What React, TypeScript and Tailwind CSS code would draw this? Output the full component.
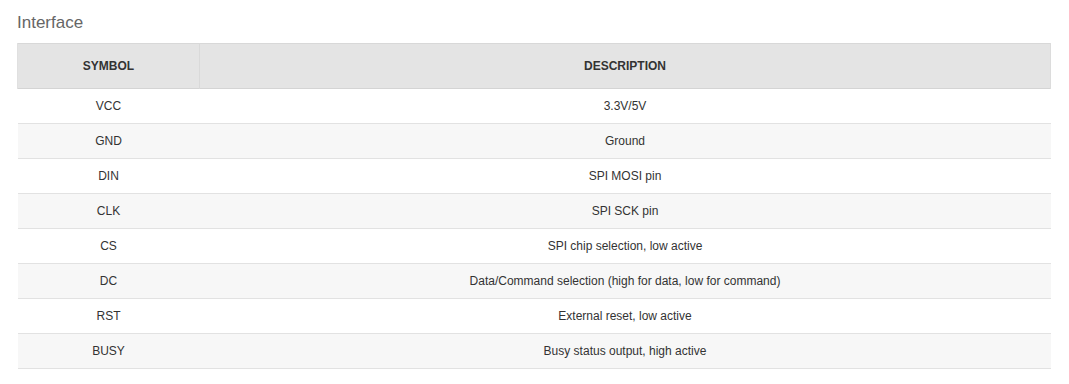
const ROWS: [string, string][] = [
  ['VCC', '3.3V/5V'],
  ['GND', 'Ground'],
  ['DIN', 'SPI MOSI pin'],
  ['CLK', 'SPI SCK pin'],
  ['CS', 'SPI chip selection, low active'],
  ['DC', 'Data/Command selection (high for data, low for command)'],
  ['RST', 'External reset, low active'],
  ['BUSY', 'Busy status output, high active'],
];

export default function App() {
  return (
    <div className="bg-white min-h-[384px] pl-[17px] pr-[18px] pt-[11px] font-['Liberation_Sans',Arial,sans-serif]">
      <h2 className="text-[17px] leading-[24px] text-[#666] mb-[8px]">Interface</h2>
      <table className="w-full border-collapse text-[12px] text-[#333]">
        <thead>
          <tr className="bg-[#e4e4e4] border-t border-[#d8d8d8] border-b border-b-[#d4d4d4]">
            <th className="w-[182px] h-[45px] font-bold text-center border-r border-[#d9d9d9] border-l border-l-[#e0e0e0]">
              SYMBOL
            </th>
            <th className="h-[45px] font-bold text-center border-r border-[#dcdcdc]">DESCRIPTION</th>
          </tr>
        </thead>
        <tbody>
          {ROWS.map(([sym, desc], i) => (
            <tr
              key={sym}
              className={`h-[35px] border-b border-[#e2e2e2] ${i % 2 === 1 ? 'bg-[#f7f7f7]' : 'bg-white'}`}
            >
              <td className="text-center">{sym}</td>
              <td className="text-center">{desc}</td>
            </tr>
          ))}
        </tbody>
      </table>
    </div>
  );
}
